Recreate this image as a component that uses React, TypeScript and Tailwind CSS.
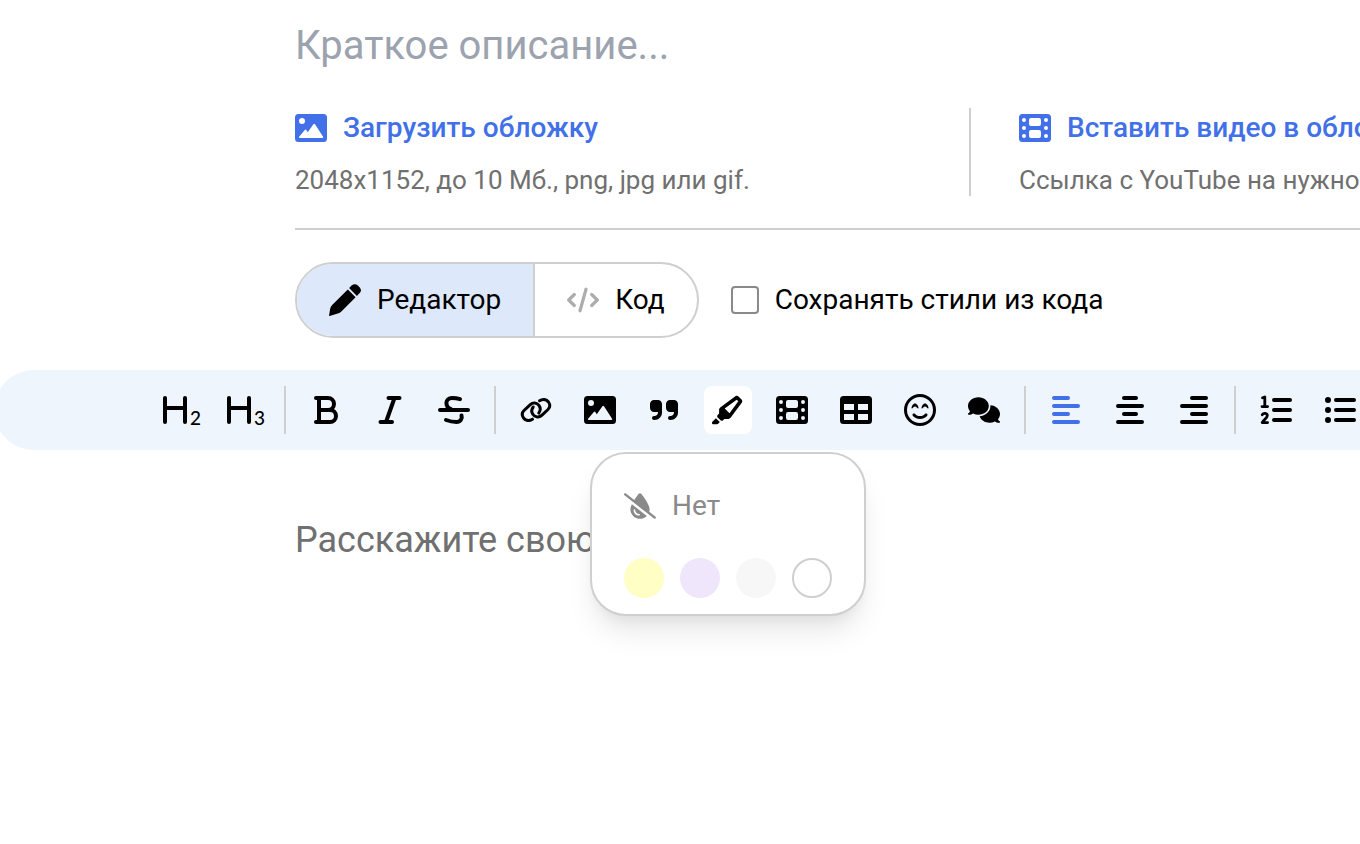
import type { ReactNode } from 'react'
import {
  FaComments,
  FaDropletSlash,
  FaHighlighter,
  FaQuoteRight,
  FaRegFaceSmileBeam,
} from 'react-icons/fa6'

function ImageIcon() {
  return (
    <svg className="size-8" viewBox="0 0 32 32" fill="currentColor" aria-hidden="true">
      <path
        fillRule="evenodd"
        d="M3.500 2h25A3.500 3.500 0 0 1 32 5.500v21a3.500 3.500 0 0 1-3.500 3.500h-25A3.500 3.500 0 0 1 0 26.500v-21A3.500 3.500 0 0 1 3.500 2ZM7 6a3 3 0 1 0 0 6 3 3 0 0 0 0-6ZM4.800 26h22.600a.8.8 0 0 0 .7-1.200L20 12.200a.9.900 0 0 0-1.600 0l-5.600 8-1.500-2.100a.9.900 0 0 0-1.500 0l-5.700 6.600A.8.8 0 0 0 4.800 26Z"
      />
    </svg>
  )
}

function FilmIcon() {
  return (
    <svg className="size-8" viewBox="0 0 32 32" fill="currentColor" aria-hidden="true">
      <path
        fillRule="evenodd"
        d="M3.500 2h25A3.500 3.500 0 0 1 32 5.500v21a3.500 3.500 0 0 1-3.500 3.500h-25A3.500 3.500 0 0 1 0 26.500v-21A3.500 3.500 0 0 1 3.500 2ZM12 6a2 2 0 0 0-2 2v4a2 2 0 0 0 2 2h8a2 2 0 0 0 2-2V8a2 2 0 0 0-2-2ZM12 18a2 2 0 0 0-2 2v4a2 2 0 0 0 2 2h8a2 2 0 0 0 2-2v-4a2 2 0 0 0-2-2ZM5 6a2 2 0 0 0 0 4 2 2 0 0 0 0-4ZM5 14a2 2 0 0 0 0 4 2 2 0 0 0 0-4ZM5 22a2 2 0 0 0 0 4 2 2 0 0 0 0-4ZM27 6a2 2 0 0 0 0 4 2 2 0 0 0 0-4ZM27 14a2 2 0 0 0 0 4 2 2 0 0 0 0-4ZM27 22a2 2 0 0 0 0 4 2 2 0 0 0 0-4Z"
      />
    </svg>
  )
}

function TableIcon() {
  return (
    <svg className="size-8" viewBox="0 0 32 32" fill="currentColor" aria-hidden="true">
      <path
        fillRule="evenodd"
        d="M3.500 2h25A3.500 3.500 0 0 1 32 5.500v21a3.500 3.500 0 0 1-3.500 3.500h-25A3.500 3.500 0 0 1 0 26.500v-21A3.500 3.500 0 0 1 3.500 2ZM4 10v6h10v-6ZM18 10v6h10v-6ZM4 20v6h10v-6ZM18 20v6h10v-6Z"
      />
    </svg>
  )
}

function PenIcon() {
  return (
    <svg className="size-8" viewBox="0 0 32 32" fill="currentColor" aria-hidden="true">
      <path d="M18.8 5.4 26.6 13.2 12.6 27.2Q11 28.8 8.8 29.6L.6 31.9Q-.1 32 .1 31.2L1.2 24.6Q1.7 22.4 3.4 20.8Z" />
      <path d="M20.1 4.1 22.6 1.6Q25.7-1.1 28.8 1.4L30.6 3.2Q33.2 6 30.7 9.1L27.9 11.9Z" />
    </svg>
  )
}

function CodeIcon() {
  return (
    <svg
      className="size-8 text-[#adadad]"
      viewBox="0 0 32 32"
      fill="none"
      stroke="currentColor"
      strokeWidth="3.2"
      strokeLinecap="round"
      strokeLinejoin="round"
      aria-hidden="true"
    >
      <path d="M7.300 10.500 1.700 16l5.600 5.500M24.700 10.500l5.600 5.500-5.600 5.500M19 5.200 13 26.800" />
    </svg>
  )
}

function LineIcon({ d, width = 4, children }: { d: string; width?: number; children?: ReactNode }) {
  return (
    <svg
      className="size-12"
      viewBox="0 0 48 48"
      fill="none"
      stroke="currentColor"
      strokeWidth={width}
      strokeLinecap="round"
      strokeLinejoin="round"
      aria-hidden="true"
    >
      <path d={d} />
      {children}
    </svg>
  )
}

function HeadingIcon({ level }: { level: string }) {
  return (
    <LineIcon d="M9 12v24M29 12v24M9 22h20">
      <text x="34" y="39" fill="currentColor" stroke="none" className="font-['Lato',sans-serif] text-[19px] font-medium">
        {level}
      </text>
    </LineIcon>
  )
}

function Tool({ label, active, tone, children }: { label: string; active?: boolean; tone?: string; children: ReactNode }) {
  return (
    <button
      type="button"
      aria-label={label}
      aria-pressed={active}
      className={`flex size-12 shrink-0 items-center justify-center rounded-lg ${active ? 'bg-white' : ''} ${tone ?? 'text-black'}`}
    >
      {children}
    </button>
  )
}

function Group({ last, children }: { last?: boolean; children: ReactNode }) {
  return (
    <div className={`flex shrink-0 gap-4 ${last ? '' : 'border-r-2 border-[#cfcfcf] pr-4'}`}>{children}</div>
  )
}

function HighlightMenu() {
  return (
    <div className="absolute top-full left-1/2 z-10 mt-[18px] flex w-[276px] -translate-x-1/2 flex-col gap-8 rounded-[36px] border-2 border-[#cfcfcf] bg-white px-8 pt-8 pb-4 shadow-[0_20px_30px_-6px_rgba(0,0,0,0.1),0_8px_12px_-4px_rgba(0,0,0,0.05)]">
      <button type="button" className="flex items-center gap-4 text-[28px] leading-10 text-[#8a8a8a]">
        <FaDropletSlash className="size-8" />
        Нет
      </button>
      <div className="flex gap-4">
        <button type="button" aria-label="Жёлтый" className="size-10 rounded-full bg-[#fffec4]" />
        <button type="button" aria-label="Фиолетовый" className="size-10 rounded-full bg-[#efe6fc]" />
        <button type="button" aria-label="Серый" className="size-10 rounded-full bg-[#f7f7f7]" />
        <button type="button" aria-label="Белый" className="size-10 rounded-full border-2 border-[#cfcfcf] bg-white" />
      </div>
    </div>
  )
}

function Toolbar() {
  return (
    <div
      role="toolbar"
      aria-label="Форматирование"
      className="-ml-1.5 flex gap-4 rounded-l-full bg-[#eef5fd] py-4 pl-[162px]"
    >
      <Group>
        <Tool label="Заголовок 2">
          <HeadingIcon level="2" />
        </Tool>
        <Tool label="Заголовок 3">
          <HeadingIcon level="3" />
        </Tool>
      </Group>
      <Group>
        <Tool label="Жирный">
          <LineIcon d="M14 12h12a6 6 0 0 1 0 12h-9M26 24h2a6 6 0 0 1 0 12H14M17 12v24" />
        </Tool>
        <Tool label="Курсив">
          <LineIcon d="M22.5 12h11M14.5 36H26M28.5 12 20 36" />
        </Tool>
        <Tool label="Зачёркнутый">
          <LineIcon d="M10 24h28M30 13.200C27 12.200 24 12 22 12c-7 0-7.500 8.500-1 11M16 34c4 1.500 7.500 2 10.500 2 4 0 6-3.500 5-6.500" />
        </Tool>
      </Group>
      <Group>
        <Tool label="Ссылка">
          <LineIcon
            width={3}
            d="M20.500 33.200C17 35.500 13.500 34.500 11.500 32 9.500 29 10 26.500 12 24.500L18 18.800C21 16 25 16.500 27 19.500 28.800 22 28.300 25 26.800 27M27.500 14.800C31 12.500 34.500 13.500 36.500 16 38.500 19 38 21.500 36 23.500L30 29.200C27 32 23 31.500 21 28.500 19.200 26 19.700 23 21.200 21"
          />
        </Tool>
        <Tool label="Изображение">
          <ImageIcon />
        </Tool>
        <Tool label="Цитата">
          <FaQuoteRight className="size-8" />
        </Tool>
        <div className="relative">
          <Tool label="Выделение цветом" active>
            <FaHighlighter className="size-8" />
          </Tool>
          <HighlightMenu />
        </div>
        <Tool label="Видео">
          <FilmIcon />
        </Tool>
        <Tool label="Таблица">
          <TableIcon />
        </Tool>
        <Tool label="Эмодзи">
          <FaRegFaceSmileBeam className="size-8" />
        </Tool>
        <Tool label="Комментарии">
          <FaComments className="size-8" />
        </Tool>
      </Group>
      <Group>
        <Tool label="По левому краю" tone="text-[#4170e8]">
          <LineIcon d="M12 12h14M12 20h24M12 28h14M12 36h24" />
        </Tool>
        <Tool label="По центру">
          <LineIcon d="M18 12h12M12 20h24M18 28h12M12 36h24" />
        </Tool>
        <Tool label="По правому краю">
          <LineIcon d="M22 12h14M12 20h24M22 28h14M12 36h24" />
        </Tool>
      </Group>
      <Group last>
        <Tool label="Нумерованный список">
          <LineIcon d="M22 14h16M22 24h16M22 34h16">
            <path
              strokeWidth="2.8"
              d="M10.500 11.800 12.800 11v9.600M10 20.600h5.600M10.200 28.800C11.500 26.600 15.400 26.800 15.300 29.700 15.200 31.800 12 33.800 10.200 36.600h5.400"
            />
          </LineIcon>
        </Tool>
        <Tool label="Маркированный список">
          <LineIcon d="M20 14h18M20 24h18M20 34h18">
            <g fill="currentColor" stroke="none">
              <circle cx="12" cy="14" r="3" />
              <circle cx="12" cy="24" r="3" />
              <circle cx="12" cy="34" r="3" />
            </g>
          </LineIcon>
        </Tool>
      </Group>
    </div>
  )
}

function CoverOption({ icon, title, hint }: { icon: ReactNode; title: string; hint: string }) {
  return (
    <div className="flex flex-col items-start gap-4 whitespace-nowrap">
      <button type="button" className="flex items-center gap-4 text-[28px] leading-10 font-medium text-[#4170e8]">
        {icon}
        {title}
      </button>
      <p className="text-[26px] leading-8 text-[#707070]">{hint}</p>
    </div>
  )
}

export default function App() {
  return (
    <main className="flex min-h-screen flex-col overflow-hidden bg-white font-['Roboto',sans-serif] text-black">
      <section className="flex flex-col pt-[22px] pl-[295px]">
        <input
          type="text"
          aria-label="Краткое описание"
          placeholder="Краткое описание..."
          className="h-12 w-full text-[40px] leading-12 outline-none placeholder:text-[#9ca3af]"
        />
        <div className="mt-[38px] flex border-b-2 border-[#cfcfcf] pb-8">
          <div className="shrink-0 basis-[676px] border-r-2 border-[#cfcfcf]">
            <CoverOption icon={<ImageIcon />} title="Загрузить обложку" hint="2048x1152, до 10 Мб., png, jpg или gif." />
          </div>
          <div className="min-w-0 flex-1 overflow-hidden pl-12">
            <CoverOption icon={<FilmIcon />} title="Вставить видео в обложку" hint="Ссылка с YouTube на нужное видео." />
          </div>
        </div>
        <div className="flex items-center gap-8 py-8 text-[28px] leading-10">
          <div className="flex overflow-hidden rounded-full border-2 border-[#cfcfcf]">
            <button type="button" className="flex items-center gap-4 border-r-2 border-[#cfcfcf] bg-[#dee8fb] px-8 py-4">
              <PenIcon />
              Редактор
            </button>
            <button type="button" className="flex items-center gap-4 px-8 py-4">
              <CodeIcon />
              Код
            </button>
          </div>
          <label className="flex items-center gap-4">
            <input type="checkbox" className="size-7 appearance-none rounded border-2 border-[#8a8a8a] bg-white checked:bg-[#4170e8]" />
            Сохранять стили из кода
          </label>
        </div>
      </section>
      <Toolbar />
      <section className="flex flex-1 pt-[66px] pl-[295px]">
        <textarea
          aria-label="Текст истории"
          placeholder="Расскажите свою историю"
          className="w-full flex-1 resize-none text-[36px] leading-12 outline-none placeholder:text-[#707070]"
        />
      </section>
    </main>
  )
}
